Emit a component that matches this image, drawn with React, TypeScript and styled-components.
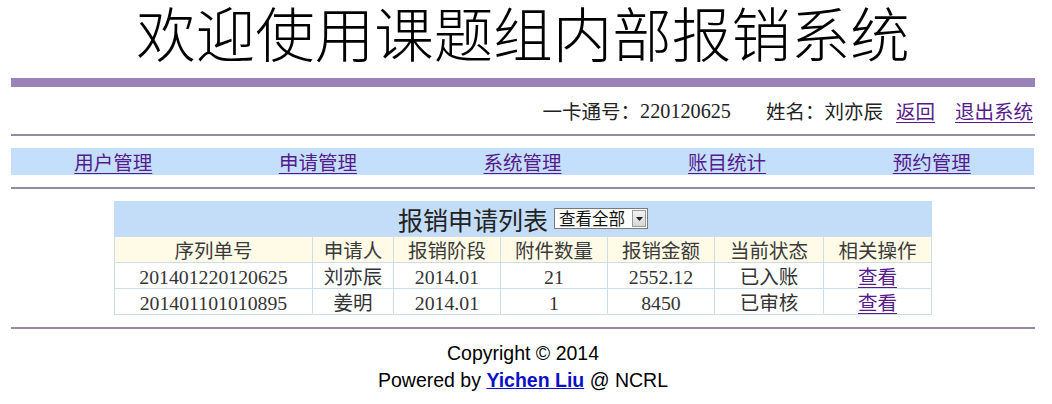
import React from "react";
import styled, { createGlobalStyle } from "styled-components";

const Global = createGlobalStyle`
  html, body { margin: 0; padding: 0; background: #fff; }
  body { font-family: "Noto Sans CJK SC", sans-serif; color: #222; }
`;

const CJK = `"Noto Sans CJK SC", sans-serif`;

const Page = styled.div`
  width: 1024px;
  margin-left: 11px;
  display: flex;
  flex-direction: column;
`;

const Title = styled.h1`
  margin: 0;
  height: 70px;
  line-height: 62px;
  font-family: ${CJK};
  font-weight: 300;
  font-size: 59.5px;
  text-align: center;
  color: #000;
`;

const Bar = styled.div`
  margin-top: 8px;
  height: 9px;
  background: #9a81b8;
`;

const Info = styled.div`
  margin-top: 12px;
  height: 24px;
  line-height: 24px;
  display: flex;
  justify-content: flex-end;
  align-items: center;
  padding-right: 2px;
  font-family: ${CJK};
  font-size: 19.5px;
  color: #222;
`;

const Num = styled.span<{ $size?: number }>`
  font-family: "Liberation Serif", serif;
  font-size: ${(p) => p.$size ?? 20.2}px;
  line-height: 1;
`;

const Gap = styled.span<{ $w: number }>`
  display: inline-block;
  width: ${(p) => p.$w}px;
`;

const VLink = styled.a`
  color: #551a8b;
  text-decoration: underline;
  text-underline-offset: 3px;
  cursor: pointer;
`;

const Rule = styled.div<{ $mt: number }>`
  margin-top: ${(p) => p.$mt}px;
  height: 2px;
  background: #958aa6;
`;

const Nav = styled.nav`
  margin-top: 12px;
  margin-right: 1px;
  height: 27px;
  background: #c4dffb;
  display: grid;
  grid-template-columns: repeat(5, 1fr);
  align-items: center;
  font-family: ${CJK};
  font-size: 19.5px;
  line-height: 27px;
`;

const NavCell = styled.div`
  text-align: center;
`;

const TableWrap = styled.div`
  margin-top: 12px;
  display: flex;
  justify-content: center;
`;

const Table = styled.table`
  width: 817px;
  border-collapse: collapse;
  table-layout: fixed;
  font-family: ${CJK};
  font-size: 19.5px;
  color: #333;
`;

const CaptionCell = styled.td`
  height: 35px;
  padding: 0;
  background: #c3dcf8;
  text-align: center;
  vertical-align: middle;
`;

const CaptionInner = styled.div`
  display: inline-flex;
  align-items: center;
  gap: 6px;
  font-size: 25px;
  line-height: 34px;
  color: #222;
`;

const SelectBox = styled.div`
  display: inline-flex;
  align-items: stretch;
  height: 21px;
  border: 1px solid #7a7a7a;
  background: #fff;
  box-sizing: border-box;
`;

const Select = styled.select`
  appearance: none;
  -webkit-appearance: none;
  border: none;
  outline: none;
  background: transparent;
  font-family: ${CJK};
  font-size: 16.5px;
  line-height: 19px;
  padding: 0 0 0 4px;
  margin: 0;
  width: 76px;
  color: #111;
`;

const Arrow = styled.span`
  width: 14px;
  margin: 1px;
  background: linear-gradient(#f4f4f4, #d6d6d6);
  border: 1px solid #9a9a9a;
  box-sizing: border-box;
  display: flex;
  align-items: center;
  justify-content: center;
`;

const Th = styled.td`
  height: 25px;
  padding: 0;
  background: #fffbe6;
  border: 1px solid #cddde9;
  text-align: center;
  line-height: 25px;
  color: #3a3a3a;
`;

const Td = styled.td`
  height: 25px;
  padding: 0;
  border: 1px solid #cddde9;
  text-align: center;
  line-height: 25px;
  background: #fff;
`;

const Footer = styled.footer`
  margin-top: 11px;
  text-align: center;
  font-family: "Liberation Sans", Arial, sans-serif;
  font-size: 19.5px;
  line-height: 27px;
  color: #000;
`;

const Author = styled.a`
  color: #0b10c8;
  font-weight: bold;
  text-decoration: underline;
  cursor: pointer;
`;

const cols = [
  { label: "序列单号", w: 198 },
  { label: "申请人", w: 81 },
  { label: "报销阶段", w: 107 },
  { label: "附件数量", w: 107 },
  { label: "报销金额", w: 107 },
  { label: "当前状态", w: 109 },
  { label: "相关操作", w: 108 },
];

const rows = [
  { id: "201401220120625", name: "刘亦辰", stage: "2014.01", files: "21", amount: "2552.12", state: "已入账" },
  { id: "201401101010895", name: "姜明", stage: "2014.01", files: "1", amount: "8450", state: "已审核" },
];

const navItems = ["用户管理", "申请管理", "系统管理", "账目统计", "预约管理"];

export default function App() {
  return (
    <>
      <Global />
      <Page>
        <Title>欢迎使用课题组内部报销系统</Title>
        <Bar />
        <Info>
          <span>一卡通号：</span>
          <Num>220120625</Num>
          <Gap $w={35} />
          <span>姓名：刘亦辰</span>
          <Gap $w={13} />
          <VLink>返回</VLink>
          <Gap $w={20} />
          <VLink>退出系统</VLink>
        </Info>
        <Rule $mt={11} />
        <Nav>
          {navItems.map((n) => (
            <NavCell key={n}>
              <VLink>{n}</VLink>
            </NavCell>
          ))}
        </Nav>
        <Rule $mt={12} />
        <TableWrap>
          <Table>
            <colgroup>
              {cols.map((c) => (
                <col key={c.label} style={{ width: c.w }} />
              ))}
            </colgroup>
            <tbody>
              <tr>
                <CaptionCell colSpan={7}>
                  <CaptionInner>
                    <span>报销申请列表</span>
                    <SelectBox>
                      <Select defaultValue="all">
                        <option value="all">查看全部</option>
                        <option value="pending">待审核</option>
                        <option value="done">已入账</option>
                      </Select>
                      <Arrow>
                        <svg width="7" height="4" viewBox="0 0 7 4">
                          <path d="M0 0h7L3.5 4z" fill="#222" />
                        </svg>
                      </Arrow>
                    </SelectBox>
                  </CaptionInner>
                </CaptionCell>
              </tr>
              <tr>
                {cols.map((c) => (
                  <Th key={c.label}>{c.label}</Th>
                ))}
              </tr>
              {rows.map((r) => (
                <tr key={r.id}>
                  <Td><Num $size={19.8}>{r.id}</Num></Td>
                  <Td>{r.name}</Td>
                  <Td><Num $size={19.8}>{r.stage}</Num></Td>
                  <Td><Num $size={19.8}>{r.files}</Num></Td>
                  <Td><Num $size={19.8}>{r.amount}</Num></Td>
                  <Td>{r.state}</Td>
                  <Td><VLink>查看</VLink></Td>
                </tr>
              ))}
            </tbody>
          </Table>
        </TableWrap>
        <Rule $mt={12} />
        <Footer>
          <div>Copyright © 2014</div>
          <div>
            Powered by <Author>Yichen Liu</Author> @ NCRL
          </div>
        </Footer>
      </Page>
    </>
  );
}
